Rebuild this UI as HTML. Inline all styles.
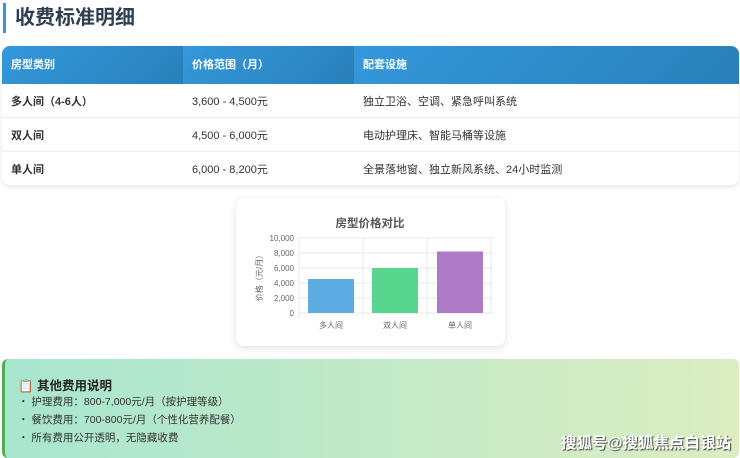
<!DOCTYPE html>
<html><head><meta charset="utf-8"><style>
*{margin:0;padding:0;box-sizing:border-box}
body{width:740px;height:458px;background:#fff;font-family:"Liberation Sans","Noto Sans CJK SC",sans-serif;position:relative;overflow:hidden;color:#333}
.t{position:absolute;left:3px;top:3px;height:30px;border-left:3px solid #3498db;padding-left:9px;font-size:20px;font-weight:bold;color:#2c3e50;line-height:30px}
.tb{position:absolute;left:2px;top:46px;width:737px;height:139px;border-radius:8px;box-shadow:0 2px 6px rgba(0,0,0,.1);overflow:hidden;background:#fff}
.r{display:flex;height:34px;border-bottom:1px solid #eee;align-items:center;font-size:11px}
.r div{padding-left:9px}
.c1{width:181px}.c2{width:171px}.c3{flex:1}
.h{height:38px;border:0}
.h div{height:38px;line-height:38px;color:#fff;font-weight:bold;background:linear-gradient(135deg,#3498db,#2980b9)}
.r .c1.b{font-weight:bold;color:#333}
.r:last-child{border:0}
.cd{position:absolute;left:236px;top:198px;width:269px;height:148px;border-radius:8px;box-shadow:0 2px 8px rgba(0,0,0,.12);background:#fff}
.ob{position:absolute;left:2px;top:359px;width:737px;height:99px;border-radius:6px;border-left:3px solid #4caf50;background:linear-gradient(90deg,#a8e6cf,#dcedc1)}
.ob h4{position:absolute;left:13px;top:16px;font-size:12.5px;color:#222}
.ob p{position:absolute;left:13px;font-size:10.5px;color:#333}
.wm{position:absolute;right:8px;top:72px;font-size:15.5px;color:#fff;font-weight:bold;text-shadow:1px 1px 1px #444}
</style></head><body>
<div class="t">收费标准明细</div>
<div class="tb">
<div class="r h"><div class="c1">房型类别</div><div class="c2">价格范围（月）</div><div class="c3">配套设施</div></div>
<div class="r"><div class="c1 b">多人间（4-6人）</div><div class="c2">3,600 - 4,500元</div><div class="c3">独立卫浴、空调、紧急呼叫系统</div></div>
<div class="r"><div class="c1 b">双人间</div><div class="c2">4,500 - 6,000元</div><div class="c3">电动护理床、智能马桶等设施</div></div>
<div class="r"><div class="c1 b">单人间</div><div class="c2">6,000 - 8,200元</div><div class="c3">全景落地窗、独立新风系统、24小时监测</div></div>
</div>
<div class="cd">
<svg width="269" height="148" style="position:absolute;left:0;top:0" font-family="Liberation Sans,Noto Sans CJK SC,sans-serif">
<text x="134" y="29" text-anchor="middle" font-size="11.5" font-weight="bold" fill="#555">房型价格对比</text>
<g stroke="#e8e8e8" stroke-width="1">
<line x1="63" y1="40" x2="256" y2="40"/><line x1="63" y1="55" x2="256" y2="55"/><line x1="63" y1="70" x2="256" y2="70"/><line x1="63" y1="85" x2="256" y2="85"/><line x1="63" y1="100" x2="256" y2="100"/><line x1="63" y1="115" x2="256" y2="115"/>
<line x1="63" y1="40" x2="63" y2="120"/><line x1="127" y1="40" x2="127" y2="120"/><line x1="191" y1="40" x2="191" y2="120"/><line x1="255" y1="40" x2="255" y2="115"/>
</g>
<g font-size="8" fill="#666" text-anchor="end">
<text x="58" y="43">10,000</text><text x="58" y="58">8,000</text><text x="58" y="73">6,000</text><text x="58" y="88">4,000</text><text x="58" y="103">2,000</text><text x="58" y="118">0</text>
</g>
<text transform="translate(26,78) rotate(-90)" text-anchor="middle" font-size="8" fill="#666">价格（元/月）</text>
<rect x="72" y="81" width="46" height="34" fill="#5dade2"/>
<rect x="136" y="70" width="46" height="45" fill="#58d68d"/>
<rect x="201" y="53.5" width="46" height="61.5" fill="#af7ac5"/>
<g font-size="8" fill="#666" text-anchor="middle"><text x="95" y="130">多人间</text><text x="159" y="130">双人间</text><text x="224" y="130">单人间</text></g>
</svg>
</div>
<div class="ob">
<h4>📋 其他费用说明</h4>
<p style="top:35px">・ 护理费用：800-7,000元/月（按护理等级）</p>
<p style="top:53px">・ 餐饮费用：700-800元/月（个性化营养配餐）</p>
<p style="top:71px">・ 所有费用公开透明，无隐藏收费</p>
<div class="wm">搜狐号@搜狐焦点白银站</div>
</div>
</body></html>
